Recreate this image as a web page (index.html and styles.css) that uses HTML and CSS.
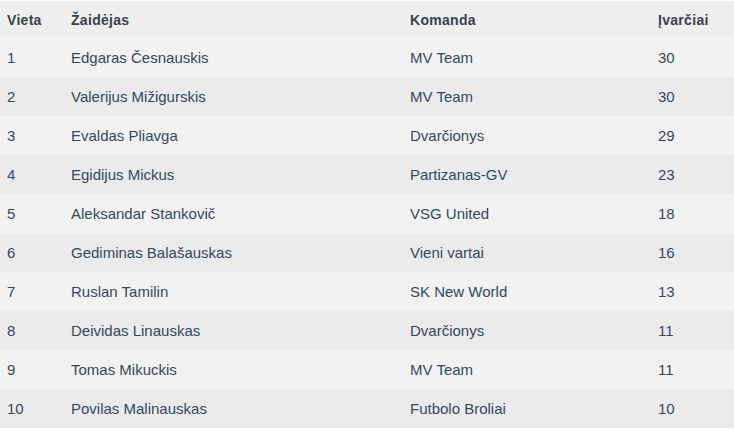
FILE: index.html
```html
<!DOCTYPE html>
<html lang="lt">
<head>
<meta charset="utf-8">
<link rel="stylesheet" href="styles.css">
</head>
<body>
<table class="scorers">
  <colgroup>
    <col class="c-pos"><col class="c-player"><col class="c-team"><col class="c-goals">
  </colgroup>
  <thead>
    <tr><th>Vieta</th><th>Žaidėjas</th><th>Komanda</th><th>Įvarčiai</th></tr>
  </thead>
  <tbody>
    <tr><td>1</td><td>Edgaras Česnauskis</td><td>MV Team</td><td>30</td></tr>
    <tr><td>2</td><td>Valerijus Mižigurskis</td><td>MV Team</td><td>30</td></tr>
    <tr><td>3</td><td>Evaldas Pliavga</td><td>Dvarčionys</td><td>29</td></tr>
    <tr><td>4</td><td>Egidijus Mickus</td><td>Partizanas-GV</td><td>23</td></tr>
    <tr><td>5</td><td>Aleksandar Stankovič</td><td>VSG United</td><td>18</td></tr>
    <tr><td>6</td><td>Gediminas Balašauskas</td><td>Vieni vartai</td><td>16</td></tr>
    <tr><td>7</td><td>Ruslan Tamilin</td><td>SK New World</td><td>13</td></tr>
    <tr><td>8</td><td>Deividas Linauskas</td><td>Dvarčionys</td><td>11</td></tr>
    <tr><td>9</td><td>Tomas Mikuckis</td><td>MV Team</td><td>11</td></tr>
    <tr><td>10</td><td>Povilas Malinauskas</td><td>Futbolo Broliai</td><td>10</td></tr>
  </tbody>
</table>
</body>
</html>
```
FILE: styles.css
```css
html, body {
  margin: 0;
  padding: 0;
  background: #ffffff;
}
body {
  font-family: "Liberation Sans", Arial, sans-serif;
  font-size: 14px;
  color: #2c3e50;
}
.scorers {
  width: 734px;
  border-collapse: collapse;
  table-layout: fixed;
  margin-top: 1px;
}
.c-pos { width: 64px; }
.c-player { width: 339px; }
.c-team { width: 248px; }
.c-goals { width: 83px; }
.scorers th,
.scorers td {
  height: 39px;
  padding: 0 0 0 7px;
  text-align: left;
  vertical-align: middle;
  box-sizing: border-box;
  white-space: nowrap;
}
.scorers td {
  font-size: 15px;
  color: #34495e;
}
.scorers th {
  height: 37px;
  font-weight: bold;
  letter-spacing: 0.3px;
  color: #37424c;
  background: #eeeeee;
}
.scorers tbody tr:nth-child(odd) td { background: #f2f2f2; }
.scorers tbody tr:nth-child(even) td { background: #ebebeb; }
```
